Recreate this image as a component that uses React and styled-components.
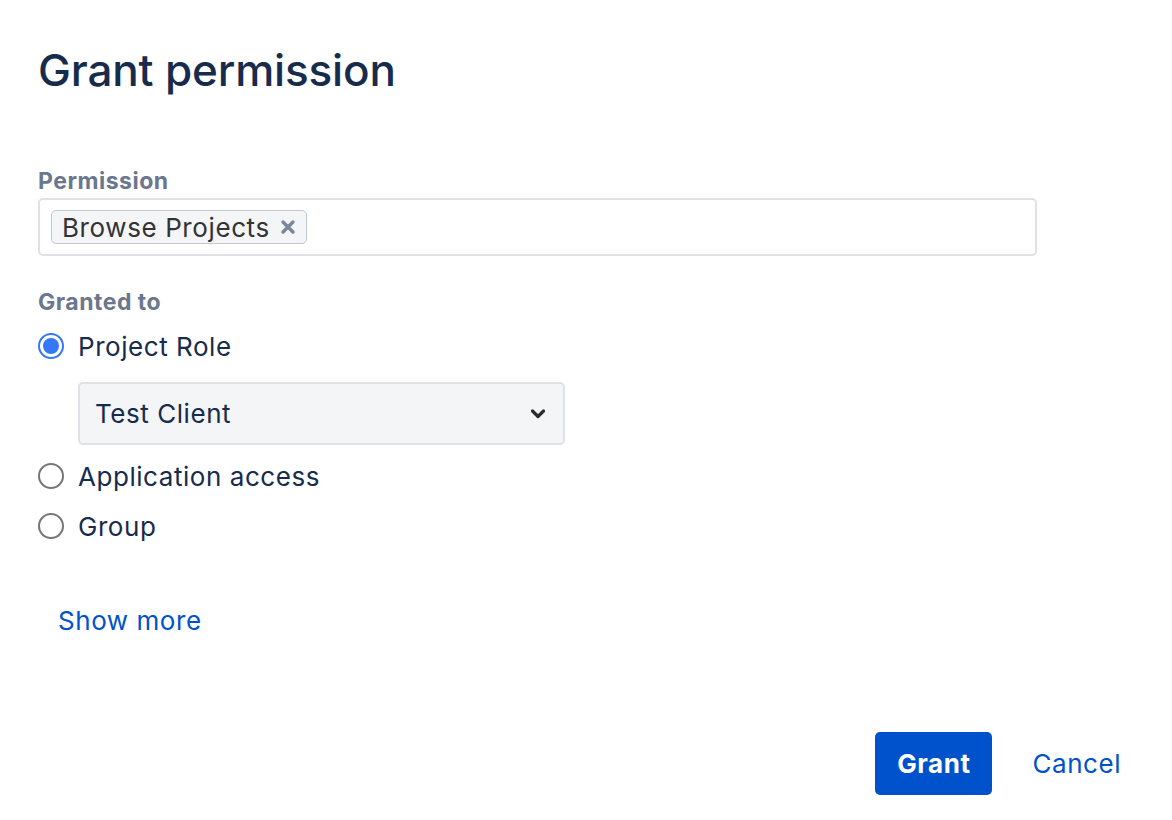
import React, { useState } from 'react';
import styled, { createGlobalStyle } from 'styled-components';

const GlobalStyle = createGlobalStyle`
  html, body {
    margin: 0;
    padding: 0;
    background: #ffffff;
  }
  body {
    font-family: Inter, "Liberation Sans", Arial, sans-serif;
    color: #172B4D;
  }
`;

const Dialog = styled.div`
  width: 1172px;
  height: 820px;
  box-sizing: border-box;
  padding: 40px 51px 0 38px;
  display: flex;
  flex-direction: column;
`;

const Title = styled.h1`
  margin: 0;
  font-size: 44px;
  font-weight: 500;
  line-height: 60px;
  letter-spacing: -0.15px;
  color: #172B4D;
`;

const Field = styled.div`
  display: flex;
  flex-direction: column;
  margin-top: ${p => p.$top || 0}px;
`;

const Label = styled.label`
  font-size: 23px;
  font-weight: 700;
  line-height: 30px;
  letter-spacing: 0.5px;
  color: #6B778C;
  margin-bottom: 2px;
`;

const TagInput = styled.div`
  width: 999px;
  height: 58px;
  box-sizing: border-box;
  border: 2px solid #DFE1E6;
  border-radius: 5px;
  display: flex;
  align-items: center;
  padding: 0 11px;
`;

const Tag = styled.span`
  display: inline-flex;
  align-items: center;
  gap: 10px;
  height: 34px;
  box-sizing: border-box;
  padding: 0 10px 0 10px;
  background: #F4F5F7;
  border: 1px solid #C1C7D0;
  border-radius: 5px;
  font-size: 26px;
  letter-spacing: 0.6px;
  color: #333333;
`;

const RadioList = styled.div`
  display: flex;
  flex-direction: column;
  margin-top: 2px;
`;

const RadioRow = styled.label`
  display: flex;
  align-items: center;
  gap: 14px;
  height: 50px;
  font-size: 26px;
  letter-spacing: 0.55px;
  color: #172B4D;
  cursor: pointer;
`;

const RadioCircle = styled.span`
  width: 26px;
  height: 26px;
  box-sizing: border-box;
  border-radius: 50%;
  border: ${p => (p.$checked ? '2px solid #3478F6' : '2px solid #767676')};
  background: #ffffff;
  display: flex;
  align-items: center;
  justify-content: center;
  &::after {
    content: '';
    width: 16px;
    height: 16px;
    border-radius: 50%;
    background: ${p => (p.$checked ? '#3478F6' : 'transparent')};
  }
`;

const SelectBox = styled.div`
  margin: 11px 0 6px 40px;
  width: 487px;
  height: 63px;
  box-sizing: border-box;
  background: #F4F5F7;
  border: 2px solid #DFE1E6;
  border-radius: 5px;
  display: flex;
  align-items: center;
  justify-content: space-between;
  padding: 0 17px 0 15px;
  font-size: 26px;
  letter-spacing: 0.55px;
  color: #172B4D;
`;

const ShowMore = styled.a`
  margin: 54px 0 0 20px;
  font-size: 26px;
  letter-spacing: 0.55px;
  color: #0052CC;
  text-decoration: none;
  align-self: flex-start;
  cursor: pointer;
`;

const Footer = styled.div`
  margin-top: auto;
  margin-bottom: 25px;
  display: flex;
  justify-content: flex-end;
  align-items: center;
  gap: 40px;
`;

const PrimaryButton = styled.button`
  height: 63px;
  width: 117px;
  padding: 0;
  border: none;
  border-radius: 5px;
  background: #0052CC;
  color: #ffffff;
  font-family: inherit;
  font-size: 26px;
  font-weight: 700;
  letter-spacing: 0.6px;
  cursor: pointer;
`;

const LinkButton = styled.button`
  border: none;
  background: none;
  padding: 0;
  color: #0052CC;
  font-family: inherit;
  font-size: 26px;
  letter-spacing: 0.55px;
  cursor: pointer;
`;

const CloseIcon = () => (
  <svg width="16" height="16" viewBox="0 0 16 16">
    <path d="M3 3 L13 13 M13 3 L3 13" stroke="#7A869A" strokeWidth="3.4" strokeLinecap="round" />
  </svg>
);

const Chevron = () => (
  <svg width="16" height="12" viewBox="0 0 16 12">
    <path d="M2.5 3 L8 8.5 L13.5 3" fill="none" stroke="#2B2B2B" strokeWidth="3.2" strokeLinecap="round" strokeLinejoin="round" />
  </svg>
);

const options = ['Project Role', 'Application access', 'Group'];

export default function App() {
  const [granted, setGranted] = useState('Project Role');
  return (
    <>
      <GlobalStyle />
      <Dialog>
        <Title>Grant permission</Title>
        <Field $top={66}>
          <Label>Permission</Label>
          <TagInput>
            <Tag>
              Browse Projects
              <CloseIcon />
            </Tag>
          </TagInput>
        </Field>
        <Field $top={31}>
          <Label>Granted to</Label>
          <RadioList>
            {options.map(opt => (
              <React.Fragment key={opt}>
                <RadioRow onClick={() => setGranted(opt)}>
                  <RadioCircle $checked={granted === opt} />
                  {opt}
                </RadioRow>
                {opt === 'Project Role' && granted === opt && (
                  <SelectBox>
                    Test Client
                    <Chevron />
                  </SelectBox>
                )}
              </React.Fragment>
            ))}
          </RadioList>
        </Field>
        <ShowMore>Show more</ShowMore>
        <Footer>
          <PrimaryButton>Grant</PrimaryButton>
          <LinkButton>Cancel</LinkButton>
        </Footer>
      </Dialog>
    </>
  );
}
